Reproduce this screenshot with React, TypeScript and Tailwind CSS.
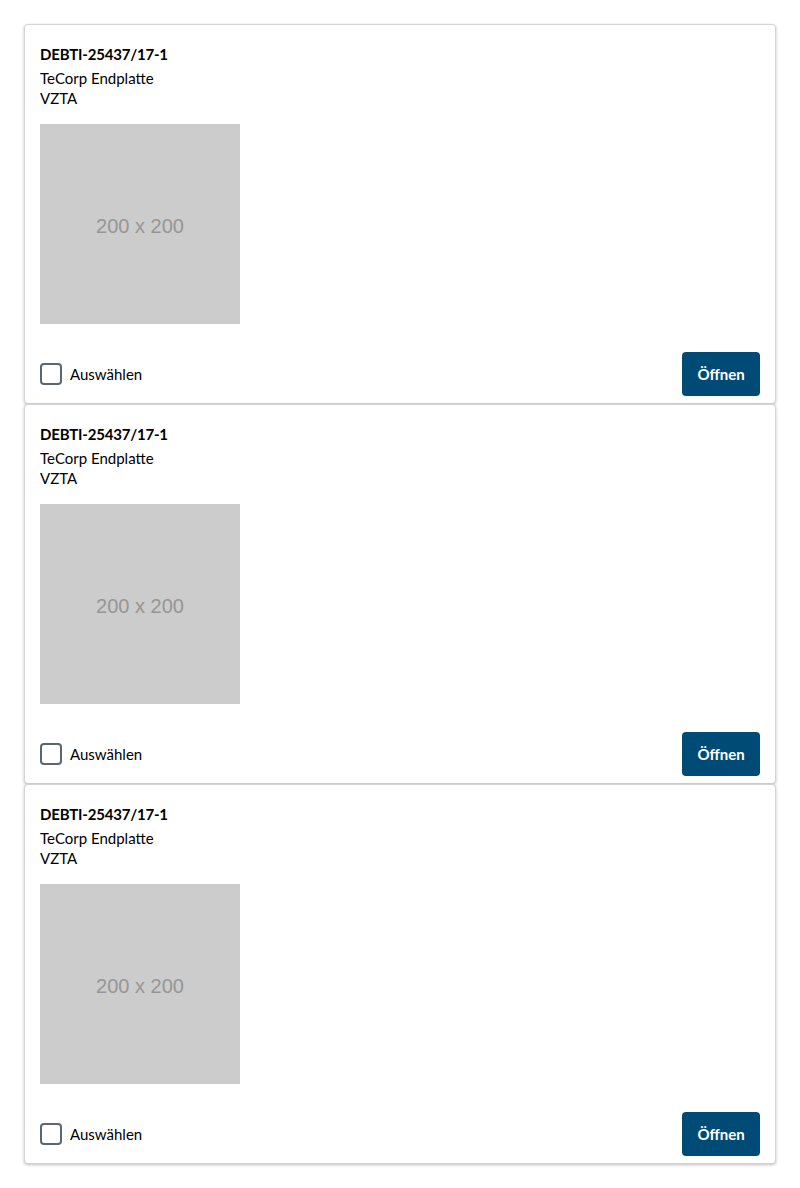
import React from "react";

const items = [
  { id: "DEBTI-25437/17-1", name: "TeCorp Endplatte", type: "VZTA" },
  { id: "DEBTI-25437/17-1", name: "TeCorp Endplatte", type: "VZTA" },
  { id: "DEBTI-25437/17-1", name: "TeCorp Endplatte", type: "VZTA" },
];

const ProductCard = ({ item }: { item: (typeof items)[number] }) => {
  return (
    <div className="bg-white border border-[#d4d4d4] rounded-[4px] shadow-[0_1px_3px_rgba(0,0,0,0.25)] px-[15px] pt-[19px] pb-[7px]">
      <h3 className="text-[15px] font-bold leading-5 text-black tracking-[-0.2px]">{item.id}</h3>
      <p className="text-[15px] leading-5 text-black mt-1">{item.name}</p>
      <p className="text-[15px] leading-5 text-black">{item.type}</p>
      <div className="w-[200px] h-[200px] bg-[#cccccc] flex items-center justify-center pt-1 mt-4 font-['Liberation_Sans',Arial,sans-serif] text-[20px] text-[#969696]">
        200 x 200
      </div>
      <div className="flex items-center justify-between mt-7">
        <label className="flex items-center gap-2 cursor-pointer">
          <span className="w-[22px] h-[22px] border-2 border-[#5b6670] rounded-[4px] bg-white" />
          <span className="text-[15px] text-black">Auswählen</span>
        </label>
        <button
          type="button"
          className="h-11 w-[78px] bg-[#004b76] text-white text-[15px] font-bold rounded-[4px]"
        >
          Öffnen
        </button>
      </div>
    </div>
  );
};

const App = () => {
  return (
    <div className="min-h-[1188px] bg-white p-6 font-['Lato','Open_Sans',sans-serif]">
      <div className="flex flex-col">
        {items.map((item, index) => (
          <ProductCard key={index} item={item} />
        ))}
      </div>
    </div>
  );
};

export default App;
